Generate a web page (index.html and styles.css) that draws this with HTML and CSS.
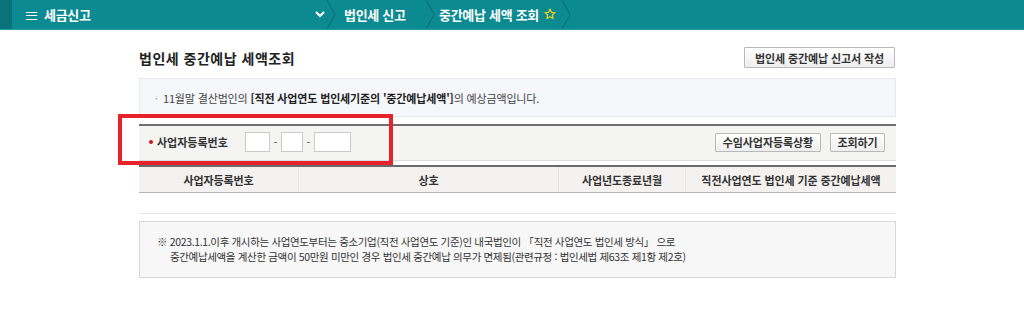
FILE: index.html
```html
<!DOCTYPE html>
<html lang="ko">
<head>
<meta charset="utf-8">
<title>법인세 중간예납 세액조회</title>
<link rel="stylesheet" href="styles.css">
</head>
<body>
<header class="topbar">
  <div class="strip"></div>
  <div class="crumb crumb-first">
    <span class="menu-ico">&#8801;</span>
    <span class="crumb-text">세금신고</span>
    <svg class="chev" width="10" height="7" viewBox="0 0 10 7"><polyline points="1,1 5,5 9,1" fill="none" stroke="#fff" stroke-width="2"/></svg>
  </div>
  <svg class="sep" width="10" height="29" viewBox="0 0 10 29"><polyline points="0,0 8,14.5 0,29" fill="none" stroke="#0a6a70" stroke-width="1"/></svg>
  <div class="crumb crumb-second"><span class="crumb-text">법인세 신고</span></div>
  <svg class="sep" width="10" height="29" viewBox="0 0 10 29"><polyline points="0,0 8,14.5 0,29" fill="none" stroke="#0a6a70" stroke-width="1"/></svg>
  <div class="crumb crumb-third">
    <span class="crumb-text">중간예납 세액 조회</span>
    <svg class="star" width="12" height="12" viewBox="0 0 24 24"><polygon points="12,2 14.9,8.6 22,9.3 16.6,14 18.2,21 12,17.3 5.8,21 7.4,14 2,9.3 9.1,8.6" fill="none" stroke="#f3d21a" stroke-width="2.4" stroke-linejoin="round"/></svg>
  </div>
  <svg class="sep" width="10" height="29" viewBox="0 0 10 29"><polyline points="0,0 8,14.5 0,29" fill="none" stroke="#0a6a70" stroke-width="1"/></svg>
</header>

<main class="content">
  <div class="title-row">
    <h1 class="title">법인세 중간예납 세액조회</h1>
    <button class="btn btn-write">법인세 중간예납 신고서 작성</button>
  </div>

  <div class="info">
    <span class="bullet">·</span>
    <span>11월말 결산법인의 <b>[직전 사업연도 법인세기준의 '중간예납세액']</b>의 예상금액입니다.</span>
  </div>

  <div class="search">
    <div class="search-left">
      <span class="req"></span>
      <span class="label">사업자등록번호</span>
      <input class="in in1" type="text">
      <span class="dash">-</span>
      <input class="in in2" type="text">
      <span class="dash">-</span>
      <input class="in in3" type="text">
    </div>
    <div class="search-right">
      <button class="btn btn-sm">수임사업자등록상황</button>
      <button class="btn btn-sm btn-query">조회하기</button>
    </div>
  </div>

  <div class="table">
    <div class="thead">
      <div class="th c1">사업자등록번호</div>
      <div class="th c2">상호</div>
      <div class="th c3">사업년도종료년월</div>
      <div class="th c4">직전사업연도 법인세 기준 중간예납세액</div>
    </div>
    <div class="trow"></div>
  </div>

  <div class="note">
    <p>※ 2023.1.1.이후 개시하는 사업연도부터는 중소기업(직전 사업연도 기준)인 내국법인이 「직전 사업연도 법인세 방식」 으로</p>
    <p class="indent">중간예납세액을 계산한 금액이 50만원 미만인 경우 법인세 중간예납 의무가 면제됨(관련규정 : 법인세법 제63조 제1항 제2호)</p>
  </div>
</main>

<div class="highlight"></div>
</body>
</html>
```

FILE: styles.css
```css
* { box-sizing: border-box; }
html, body { margin: 0; padding: 0; background: #fff; }
body {
  font-family: "Noto Sans CJK KR", "Noto Sans", sans-serif;
  color: #333;
  position: relative;
}

.topbar {
  height: 30px;
  background: #0b8a92;
  border-bottom: 1px solid #2a9ca3;
  display: flex;
  align-items: stretch;
  color: #fff;
}
.strip { width: 12px; background: #08737a; }
.crumb {
  display: flex;
  align-items: center;
  font-size: 13px;
  font-weight: bold;
  letter-spacing: -0.3px;
}
.crumb-first { width: 313px; padding-left: 12px; }
.menu-ico { font-size: 15px; font-weight: normal; width: 20px; line-height: 1; }
.crumb-first .crumb-text { flex: 1; }
.sep { flex: none; margin-left: 2px; }
.crumb-second { width: 87px; padding-left: 7px; }
.crumb-third { width: 124px; padding-left: 3px; }
.star { margin-left: 5px; margin-top: -2px; }

.content {
  width: 757px;
  margin: 17px 0 0 139px;
}
.title-row {
  display: flex;
  justify-content: space-between;
  align-items: center;
  height: 21px;
}
.title {
  margin: 0;
  font-size: 14px;
  font-weight: bold;
  color: #222;
  letter-spacing: 0.5px;
}
.btn {
  font-family: inherit;
  font-weight: bold;
  font-size: 11px;
  color: #333;
  background: linear-gradient(#ffffff, #eeeeee);
  border: 1px solid #b8b8b8;
  border-radius: 1px;
  padding: 0 8px;
  cursor: pointer;
  letter-spacing: -0.1px;
}
.btn-write { height: 21px; width: 151px; margin-right: 1px; }

.info {
  margin-top: 10px;
  height: 39px;
  background: #f5f7fb;
  border: 1px solid #e6e9f0;
  display: flex;
  align-items: center;
  padding-left: 15px;
  font-size: 11px;
  color: #444;
  letter-spacing: -0.15px;
}
.info .bullet { color: #999; margin-right: 5px; }
.info b { color: #222; }

.search {
  margin-top: 7px;
  height: 37px;
  background: #f4f4f3;
  border-top: 2px solid #707070;
  border-bottom: 1px solid #dcdcdc;
  display: flex;
  align-items: center;
  justify-content: space-between;
  padding: 0 11px 2px 10px;
}
.search-left { display: flex; align-items: center; }
.req {
  width: 4px;
  height: 4px;
  border-radius: 50%;
  background: #d0101b;
  margin-right: 4px;
}
.label { font-size: 11px; font-weight: bold; color: #333; width: 88px; letter-spacing: 0; }
.in {
  height: 20px;
  border: 1px solid #c9c9c9;
  background: #fff;
  padding: 0;
  margin: 0;
}
.in1 { width: 25px; }
.in2 { width: 22px; }
.in3 { width: 37px; }
.dash { font-size: 11px; width: 11px; text-align: center; color: #555; }
.search-right { display: flex; gap: 9px; }
.btn-sm { height: 19px; padding: 0 7px; }
.btn-query { width: 55px; padding: 0; }

.table { margin-top: 4px; }
.thead {
  display: flex;
  height: 28px;
  background: #f3f2f0;
  border-top: 2px solid #6a6a6a;
  border-bottom: 1px solid #b5b5b5;
}
.th {
  display: flex;
  align-items: center;
  justify-content: center;
  font-size: 11px;
  font-weight: bold;
  color: #333;
  border-left: 1px solid #e4e3e0;
  letter-spacing: -0.1px;
}
.c1 { width: 159px; border-left: none; }
.c2 { width: 260px; }
.c3 { width: 127px; }
.c4 { flex: 1; }
.trow { height: 21px; border-bottom: 1px solid #e6e6e6; }

.note {
  margin-top: 7px;
  height: 57px;
  background: #f7f7f7;
  border: 1px solid #d7d7d7;
  padding: 12px 0 0 17px;
  font-size: 10.5px;
  color: #333;
  letter-spacing: -0.35px;
}
.note p { margin: 0; line-height: 15px; }
.note .indent { padding-left: 13px; }

.highlight {
  position: absolute;
  left: 118px;
  top: 114px;
  width: 275px;
  height: 51px;
  border: 4px solid #e8222b;
  pointer-events: none;
}
```
